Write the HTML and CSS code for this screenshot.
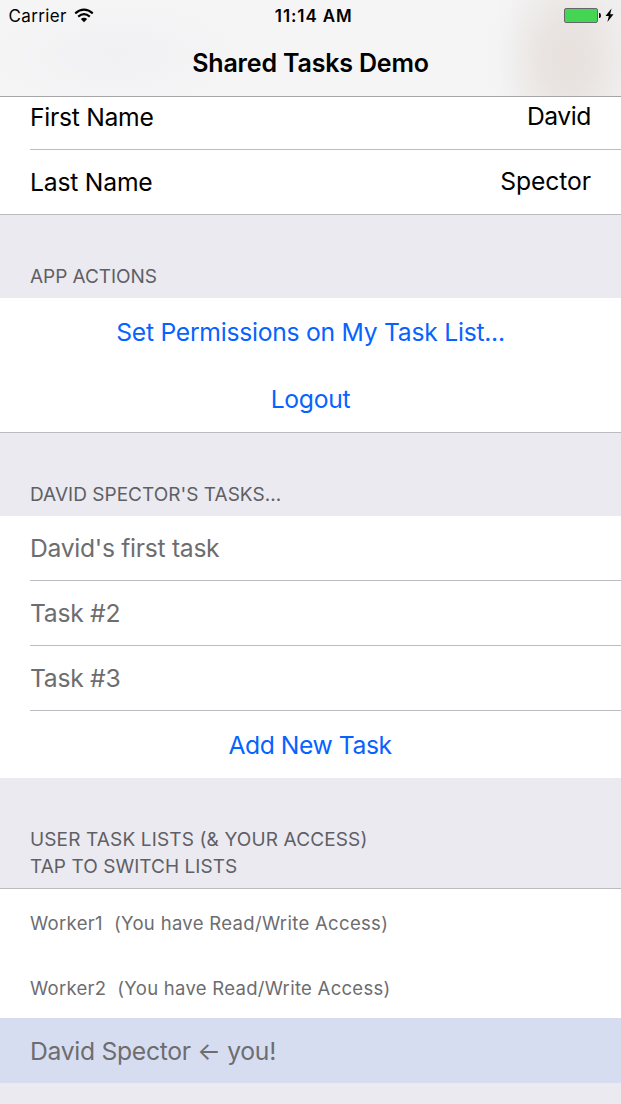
FILE: index.html
```html
<!DOCTYPE html>
<html lang="en">
<head>
<meta charset="utf-8">
<title>Shared Tasks Demo</title>
<link rel="stylesheet" href="styles.css">
</head>
<body>
<header class="nav">
  <div class="status">
    <div class="carrier"><span class="carrier-name">Carrier</span>
      <svg class="wifi" width="20" height="15" viewBox="0 0 20 15" fill="none" stroke="#000"><path d="M1.2 5.4Q10 -2 18.8 5.4" stroke-width="2.1"/><path d="M4.2 8.6Q10 3.7 15.8 8.6" stroke-width="2.1"/><path d="M6.8 11Q10 8.4 13.2 11L10 14.2Z" fill="#000" stroke="none"/></svg>
    </div>
    <div class="time">11:14 AM</div>
    <div class="power">
      <svg width="52" height="18" viewBox="0 0 52 18"><rect x=".5" y="1.5" width="33" height="14" rx="1.6" fill="#44d653" stroke="#66666a"/><path d="M35 6h1q1 1 1 2.5t-1 2.5h-1z" fill="#111"/><path d="M47.5 1.5L41.5 9h3.3L43.4 15 49.5 7.3h-3.3z" fill="#000"/></svg>
    </div>
  </div>
  <h1 class="title">Shared Tasks Demo</h1>
</header>
<main>
  <section class="group profile">
    <div class="row"><span>First Name</span><span class="value">David</span></div>
    <div class="row last"><span class="lastname">Last Name</span><span class="value spector">Spector</span></div>
  </section>
  <h2 class="heading"><span class="h-app">APP ACTIONS</span></h2>
  <section class="group ruled">
    <div class="row action"><span class="a-perm">Set Permissions on My Task List...</span></div>
    <div class="row action"><span>Logout</span></div>
  </section>
  <h2 class="heading"><span class="h-tasks">DAVID SPECTOR'S TASKS...</span></h2>
  <section class="group">
    <div class="row task"><span class="first-task">David's first task</span></div>
    <div class="row task"><span>Task #2</span></div>
    <div class="row task"><span>Task #3</span></div>
    <div class="row action"><span class="a-add">Add New Task</span></div>
  </section>
  <h2 class="heading users"><span class="h-users">USER TASK LISTS (&amp; YOUR ACCESS)</span><br><span class="h-tap">TAP TO SWITCH LISTS</span></h2>
  <section class="group">
    <div class="row worker"><span>Worker1&nbsp; (You have Read/Write Access)</span></div>
    <div class="row worker second"><span>Worker2&nbsp; (You have Read/Write Access)</span></div>
    <div class="row selected"><span class="you">David Spector ← you!</span></div>
  </section>
</main>
</body>
</html>
```

FILE: styles.css
```css
* { box-sizing: border-box; }
body { margin: 0; height: 1104px; overflow: hidden; background: #ebeaf0; color: #000; font-family: Inter, "Liberation Sans", sans-serif; }
.nav { position: relative; height: 97px; border-bottom: 1px solid #a5a5a8; background: radial-gradient(ellipse 85px 120px at 568px 58px, #e8e1de 0%, #e9e4e1 30%, rgba(238,235,234,.8) 60%, rgba(243,242,242,.4) 82%, rgba(245,245,245,0) 100%), radial-gradient(ellipse 130px 55px at 115px 55px, #f1f1f3 0%, rgba(245,245,246,0) 100%), linear-gradient(90deg, #f5f5f6 80%, #eeedef 100%); }
.status { display: grid; grid-template-columns: 1fr auto 1fr; height: 32px; padding: 0 5px 0 8.5px; font-size: 17px; line-height: 32px; }
.carrier { display: flex; align-items: center; gap: 7px; }
.carrier-name { letter-spacing: .36px; }
.wifi { margin-bottom: 2px; }
.time { font-weight: 600; font-size: 17px; letter-spacing: .9px; margin-left: 3px; }
.power { display: flex; justify-content: flex-end; align-items: center; }
.title { margin: 14px 0 0; text-align: center; font-size: 25px; font-weight: 600; line-height: 34px; letter-spacing: -.17px; }
.group { background: #fff; }
.profile { margin-top: -12px; border-bottom: 1px solid #bcbbc1; }
.ruled { border-bottom: 1px solid #bcbbc1; }
.row { display: flex; align-items: center; justify-content: space-between; height: 65px; padding: 0 30px; font-size: 24.7px; line-height: 30px; letter-spacing: -.28px; }
.profile .row:first-child, .task { height: 65px; padding-bottom: 1px; background: linear-gradient(#bcbbc1, #bcbbc1) 30px 100% / 100% 1px no-repeat; }
.profile .last { height: 64px; }
.lastname { letter-spacing: -.2px; }
.value { letter-spacing: -.45px; padding-bottom: 2px; }
.spector { letter-spacing: -.1px; }
.action { justify-content: center; height: 67px; padding: 0; color: #0763ff; }
.a-perm { letter-spacing: -.26px; }
.a-add { letter-spacing: -.44px; padding-right: 1px; }
.task, .worker, .selected { color: #6d6d70; }
.first-task { letter-spacing: -.3px; }
.heading { display: flow-root; height: 83px; margin: 0; padding: 48px 30px 0; font-size: 19px; font-weight: 400; line-height: 27px; color: #5f5f66; }
.h-app { letter-spacing: -.04px; }
.h-tasks { letter-spacing: .025px; }
.users { height: 111px; border-bottom: 1px solid #bcbbc1; }
.h-users { letter-spacing: .14px; }
.h-tap { letter-spacing: .05px; }
.worker { height: 64.5px; padding: 3px 30px 0; font-size: 18.5px; letter-spacing: .32px; }
.second { padding-top: 4px; letter-spacing: .28px; }
.selected { background: #d7ddf1; }
.you { letter-spacing: -.3px; }
```
